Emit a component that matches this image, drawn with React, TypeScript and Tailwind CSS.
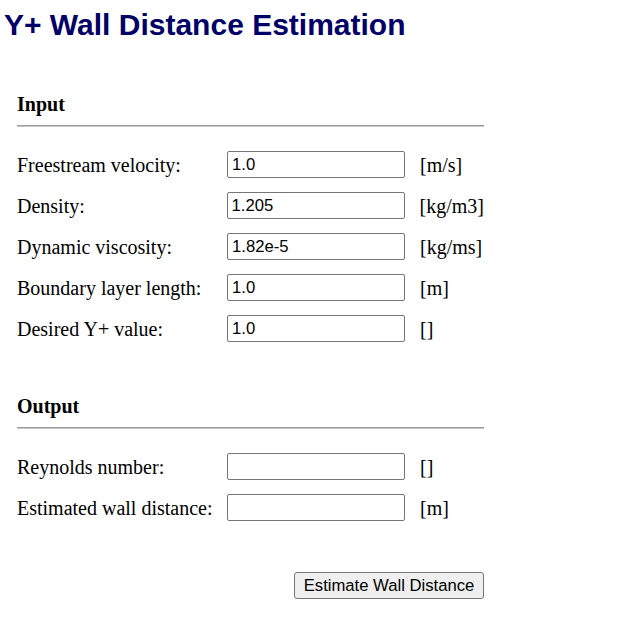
import React from "react";

type Row = { label: string; value: string; unit: string };

const inputs: Row[] = [
  { label: "Freestream velocity:", value: "1.0", unit: "[m/s]" },
  { label: "Density:", value: "1.205", unit: "[kg/m3]" },
  { label: "Dynamic viscosity:", value: "1.82e-5", unit: "[kg/ms]" },
  { label: "Boundary layer length:", value: "1.0", unit: "[m]" },
  { label: "Desired Y+ value:", value: "1.0", unit: "[]" },
];

const outputs: Row[] = [
  { label: "Reynolds number:", value: "", unit: "[]" },
  { label: "Estimated wall distance:", value: "", unit: "[m]" },
];

function Section({ title, rows }: { title: string; rows: Row[] }) {
  return (
    <div className="flex flex-col">
      <h2 className="text-[20px] font-bold leading-[24px]">{title}</h2>
      <div className="mt-[9px] h-[2px] border-t border-t-[#9a9a9a] bg-[#c8c8c8]" />
      <div className="mt-[24px] flex flex-col gap-[14px]">
        {rows.map((r) => (
          <div key={r.label} className="flex h-[27px] items-center">
            <span className="w-[210px] text-[20px] leading-[24px]">{r.label}</span>
            <input
              readOnly
              defaultValue={r.value}
              className="h-[27px] w-[178px] rounded-[2px] border border-[#767676] bg-white px-[4px] text-[16.67px] text-black outline-none"
              style={{ fontFamily: '"Liberation Sans", Arial, sans-serif' }}
            />
            <span className="ml-[15px] text-[20px] leading-[24px]">{r.unit}</span>
          </div>
        ))}
      </div>
    </div>
  );
}

export default function App() {
  return (
    <div
      className="min-h-[627px] w-[630px] bg-white text-black"
      style={{ fontFamily: '"Liberation Serif", "Times New Roman", serif' }}
    >
      <h1
        className="pl-[4px] pt-[7px] text-[30px] font-bold leading-[36px] text-[#000066]"
        style={{ fontFamily: '"Liberation Sans", Arial, sans-serif' }}
      >
        Y+ Wall Distance Estimation
      </h1>
      <div className="ml-[17px] mt-[49px] flex w-[467px] flex-col">
        <Section title="Input" rows={inputs} />
        <div className="mt-[52px]">
          <Section title="Output" rows={outputs} />
        </div>
        <div className="mt-[51px] flex justify-end">
          <button
            className="h-[27px] w-[190px] rounded-[3px] border border-[#767676] bg-[#efefef] text-[16.67px] leading-[20px] text-black"
            style={{ fontFamily: '"Liberation Sans", Arial, sans-serif' }}
          >
            Estimate Wall Distance
          </button>
        </div>
      </div>
    </div>
  );
}
